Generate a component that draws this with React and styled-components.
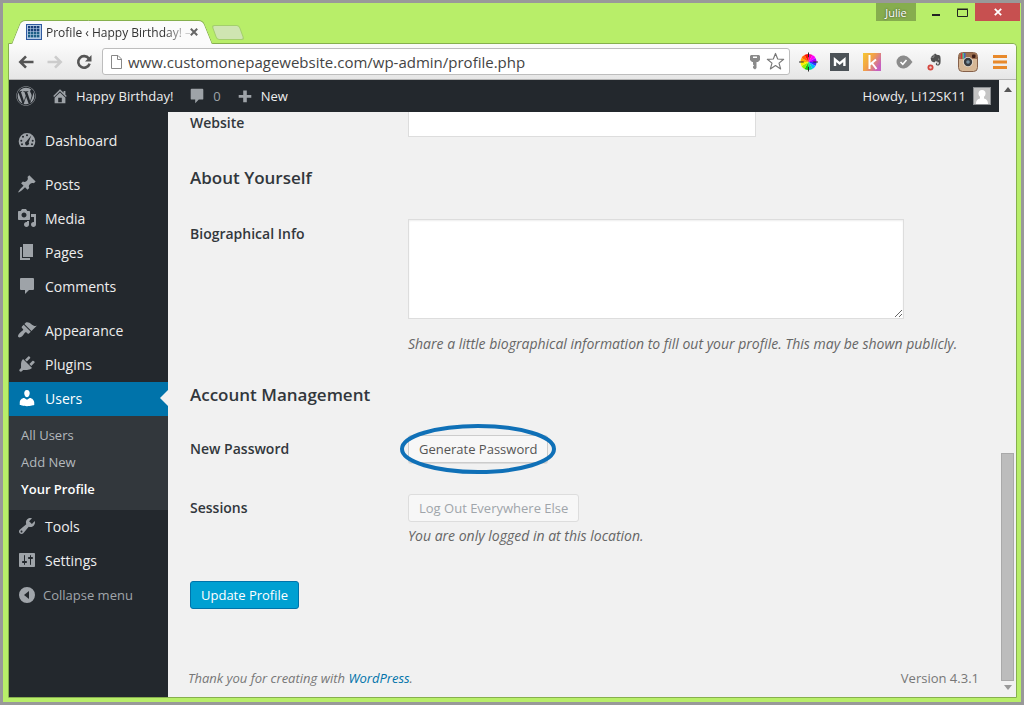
import React from 'react'
import styled, { createGlobalStyle, css } from 'styled-components'
import { FaWordpress, FaEvernote } from 'react-icons/fa'

const GlobalStyle = createGlobalStyle`
*, *::before, *::after {
  box-sizing: border-box;
}

body {
  margin: 0;
  font-family: 'Open Sans', sans-serif;
  font-size: 14px;
  color: #444;
}

button, input, textarea {
  font-family: inherit;
  margin: 0;
}
`

/* ---------- window ---------- */

const Desktop = styled.div`
display: flex;
flex-direction: column;
min-height: 100vh;
border: 3px solid #999;
background: #b8ee69;
padding: 0 4px 4px 5px;
`

const TitleBar = styled.header`
display: flex;
justify-content: space-between;
align-items: flex-start;
height: 40px;
margin-right: -3px;
`

const TabStrip = styled.div`
display: flex;
align-items: flex-end;
gap: 6px;
height: 41px;
padding-left: 8px;
`

const Tab = styled.div`
position: relative;
display: flex;
align-items: center;
width: 192px;
height: 24px;
padding: 0 10px;
color: #333;

&::before, &::after {
  content: '';
  position: absolute;
  top: 0;
  bottom: 0;
  background: #fbfbfb;
  border-top: 1px solid #86b04e;
}
&::before {
  left: 0;
  right: 40%;
  border-left: 1px solid #86b04e;
  border-radius: 5px 0 0 0;
  transform: skewX(-22deg);
}
&::after {
  left: 40%;
  right: 0;
  border-right: 1px solid #86b04e;
  border-radius: 0 5px 0 0;
  transform: skewX(22deg);
}
& > * {
  position: relative;
  z-index: 1;
}
`

const TabTitle = styled.span`
flex: 1;
margin-left: 4px;
overflow: hidden;
white-space: nowrap;
font-size: 12px;
mask-image: linear-gradient(90deg, #000 82%, rgba(0, 0, 0, .25) 97%);
`

const PlainButton = styled.button`
display: flex;
align-items: center;
justify-content: center;
padding: 0;
border: none;
background: transparent;
color: inherit;
cursor: pointer;
`

const CloseTab = styled(PlainButton)`
color: #666;
`

const NewTab = styled(PlainButton)`
width: 28px;
height: 15px;
margin-bottom: 4px;
border: 1px solid #a3cf6c;
border-radius: 3px;
background: #cfe5b2;
transform: skewX(20deg);
`

const WindowButtons = styled.div`
display: flex;
height: 18px;
`

const UserBadge = styled(PlainButton)`
width: 40px;
background: #86ad4e;
color: #fff;
font-size: 11px;
text-shadow: 0 0 2px #333;
margin-right: 7px;
`

const WindowButton = styled(PlainButton)`
width: ${props => props.$close ? '45px' : '26px'};
background: ${props => props.$close ? '#c75050' : 'transparent'};
color: ${props => props.$close ? '#fff' : '#222'};
`

const Frame = styled.div`
flex: 1;
display: flex;
flex-direction: column;
border: 1px solid #86b04e;
border-radius: 0 4px 0 0;
background: #f1f1f1;
`

const Toolbar = styled.div`
display: flex;
align-items: center;
height: 36px;
padding-left: 9px;
border-radius: 0 4px 0 0;
border-bottom: 1px solid #b5b5b5;
background: linear-gradient(#fbfbfb, #e6e6e6);
`

const NavButtons = styled.div`
display: flex;
gap: 13px;
width: 84px;
`

const Omnibox = styled.div`
flex: 1;
display: flex;
align-items: center;
height: 27px;
padding: 0 4px 0 7px;
border: 1px solid #bdbdbd;
border-radius: 3px;
background: #fff;
gap: 5px;
`

const Address = styled.input`
flex: 1;
min-width: 0;
padding: 0;
border: none;
outline: none;
background: transparent;
font-size: 15px;
color: #444;
`

const Extensions = styled.div`
display: grid;
grid-template-columns: repeat(7, 32px);
place-items: center;
margin-left: 2px;
`

/* ---------- page ---------- */

const Viewport = styled.div`
flex: 1;
display: flex;
`

const Page = styled.div`
flex: 1;
min-width: 0;
display: flex;
flex-direction: column;
`

const ScrollBar = styled.div`
display: flex;
flex-direction: column;
align-items: center;
width: 17px;
padding: 7px 0;
background: #f1f1f1;
`

const ScrollTrack = styled.div`
flex: 1;
display: flex;
flex-direction: column;
justify-content: flex-end;
padding: 4px 0;
`

const ScrollThumb = styled.div`
width: 13px;
height: 39%;
border: 1px solid #a9a9a9;
background: #bcbcbc;
`

const AdminBar = styled.nav`
display: flex;
align-items: center;
height: 32px;
padding: 0 8px 0 7px;
background: #23282d;
color: #eee;
font-size: 13px;
`

const BarLink = styled.a`
display: flex;
align-items: center;
gap: 7px;
margin-left: ${props => props.$push ? 'auto' : '0'};
margin-right: 15px;
color: ${props => props.$dim ? '#9ea3a8' : '#eee'};
text-decoration: none;

svg {
  color: #9ea3a8;
}
&:last-child {
  margin-right: 0;
}
`

const Columns = styled.div`
flex: 1;
display: flex;
`

const SideMenu = styled.nav`
width: 159px;
padding-top: 12px;
background: #23282d;
`

const MenuGroup = styled.ul`
list-style: none;
margin: 0 0 10px;
padding: 0;
`

const MenuLink = styled.a`
position: relative;
display: flex;
align-items: center;
gap: 8px;
height: 34px;
padding: 0 0 2px 8px;
color: #eee;
text-decoration: none;

svg {
  color: #9ea3a8;
}

${props => props.$current && css`
  background: #0073aa;
  color: #fff;
  svg {
    color: #fff;
  }
  &::after {
    content: '';
    position: absolute;
    right: 0;
    border: 8px solid transparent;
    border-right-color: #f1f1f1;
  }
`}
`

const SubMenu = styled.ul`
list-style: none;
margin: 0;
padding: 6px 0 7px;
background: #32373c;
`

const SubLink = styled.a`
display: block;
padding-left: 12px;
font-size: 13px;
line-height: 27px;
text-decoration: none;
font-weight: ${props => props.$current ? 600 : 400};
color: ${props => props.$current ? '#fff' : '#b4b9be'};
`

const Collapse = styled(PlainButton)`
gap: 6px;
height: 34px;
padding-left: 8px;
font-size: 13px;
color: #a0a5aa;
`

const Content = styled.main`
flex: 1;
min-width: 0;
display: flex;
flex-direction: column;
padding: 0 20px 0 22px;
`

const FormRow = styled.div`
display: grid;
grid-template-columns: 218px 1fr;
align-items: start;
margin-bottom: ${props => props.$gap || '0'};
`

const Label = styled.label`
padding-top: ${props => props.$top || '4px'};
line-height: 20px;
font-weight: 600;
color: #32373c;
`

const Heading = styled.h3`
margin: 0;
font-size: 17px;
line-height: 24px;
font-weight: 600;
color: #32373c;
`

const TextField = styled.input`
width: 348px;
max-width: 100%;
height: 25px;
border: 1px solid #ddd;
border-top: none;
background: #fff;
`

const Field = styled.div`
min-width: 0;
padding-top: 29px;
`

const TextArea = styled.textarea`
display: block;
width: 496px;
max-width: 100%;
height: 100px;
border: 1px solid #ddd;
background: #fff;
box-shadow: inset 0 1px 2px rgba(0, 0, 0, .07);
`

const Hint = styled.p`
margin: ${props => props.$top || '0'} 0 0;
line-height: 20px;
font-style: italic;
color: #666;
white-space: nowrap;
`

const Passwords = styled.section`
padding-top: 28px;
`

const Button = styled.button`
height: 28px;
padding: 0 10px;
border: 1px solid #ccc;
border-radius: 3px;
background: #f7f7f7;
font-size: 13px;
color: #555;
box-shadow: 0 1px 0 #ddd;

&:disabled {
  border-color: #ddd;
  color: #a0a5aa;
  box-shadow: none;
}

${props => props.$primary && css`
  align-self: flex-start;
  border-color: #0073aa;
  background: #00a0d2;
  color: #fff;
  box-shadow: none;
`}
`

const Circled = styled.div`
position: relative;
width: max-content;

svg {
  position: absolute;
  left: 50%;
  top: 50%;
  transform: translate(-50%, -50%);
  pointer-events: none;
}
`

const Footer = styled.footer`
display: flex;
justify-content: space-between;
margin: auto 0 9px -2px;
font-size: 13px;
line-height: 20px;
color: #777;

a {
  color: #0073aa;
  text-decoration: none;
}
`

/* ---------- icons ---------- */

const paths = {
  dashboard: 'M3.8 17h12.400A8.200 8.200 0 0 0 18.300 11.300 8.300 8.300 0 1 0 1.700 11.300 8.200 8.200 0 0 0 3.800 17zM10 4.300a1 1 0 1 1 0 2 1 1 0 0 1 0-2zM6 5.800a1 1 0 1 1 0 2 1 1 0 0 1 0-2zM4.300 9.700a1 1 0 1 1 0 2 1 1 0 0 1 0-2zM15.700 9.700a1 1 0 1 1 0 2 1 1 0 0 1 0-2zM14.300 5.500L11.700 12.200A2 2 0 1 1 9.300 11.500zM5 13.200a1 1 0 1 1 0 2 1 1 0 0 1 0-2zM15 13.200a1 1 0 1 1 0 2 1 1 0 0 1 0-2z',
  posts: 'M10.44 3.02l1.82-1.82 6.36 6.35-1.83 1.82c-1.05-.68-2.48-.57-3.41.36l-.75.75c-.92.93-1.04 2.35-.35 3.41l-1.83 1.82-2.41-2.41-2.8 2.79c-.42.42-3.38 2.71-3.8 2.29s1.86-3.39 2.28-3.81l2.79-2.79L4.1 9.36l1.83-1.82c1.05.69 2.48.57 3.4-.36l.75-.75c.93-.92 1.05-2.35.36-3.41z',
  media: 'M13 11V4c0-.55-.45-1-1-1h-1.67L9 1H5L3.67 3H2c-.55 0-1 .45-1 1v7c0 .55.45 1 1 1h10c.55 0 1-.45 1-1zM7 4.500c1.380 0 2.500 1.120 2.500 2.500S8.380 9.500 7 9.500 4.500 8.380 4.500 7 5.620 4.500 7 4.500zM14 6h5v10.500c0 1.380-1.120 2.500-2.500 2.500S14 17.880 14 16.500s1.120-2.500 2.500-2.500c.170 0 .340.020.500.050V9h-3V6zm-4 8.050V13h2v3.500c0 1.380-1.120 2.500-2.500 2.500S7 17.880 7 16.500 8.120 14 9.500 14c.170 0 .340.020.500.050z',
  pages: 'M6 15V2h10v13H6zm-1 1h8v2H3V5h2v11z',
  comments: 'M4 2h12a1 1 0 0 1 1 1v10a1 1 0 0 1-1 1h-4l-4 4v-4H4a1 1 0 0 1-1-1V3a1 1 0 0 1 1-1z',
  appearance: 'M14.48 11.06L7.41 3.99l1.5-1.5c.5-.56 2.3-.47 3.51.32 1.21.8 1.43 1.28 2.91 2.1 1.18.64 2.45 1.26 4.45.85zm-.71.71L6.7 4.7 4.93 6.47c-.39.39-.39 1.02 0 1.41l1.06 1.06c.39.39.39 1.03 0 1.42-.6.6-1.43 1.11-2.21 1.69-.35.26-.7.53-1.01.84C1.43 14.23.4 16.08 1.4 17.07c.99 1 2.84-.03 4.18-1.36.31-.31.58-.66.85-1.02.57-.78 1.08-1.61 1.69-2.21.39-.39 1.02-.39 1.41 0l1.06 1.06c.39.39 1.02.39 1.41 0z',
  plugins: 'M13.11 4.36L9.87 7.6 8 5.73l3.24-3.24c.35-.34 1.05-.2 1.56.32.52.51.66 1.21.31 1.55zm-8 1.77l.91-1.12 9.01 9.01-1.19.84c-.71.71-2.63 1.16-3.82 1.16H6.14L4.9 17.26c-.59.59-1.54.59-2.12 0-.59-.58-.59-1.53 0-2.12l1.24-1.24v-3.88c0-1.130.400-3.190 1.090-3.890zm7.260 3.970l3.240-3.240c.340-.350 1.040-.210 1.550.310.520.510.660 1.210.310 1.550l-3.240 3.250z',
  users: 'M10 9.25c-2.27 0-2.73-3.44-2.73-3.44C7 4.02 7.82 2 9.97 2c2.16 0 2.98 2.02 2.71 3.81 0 0-.41 3.44-2.68 3.44zm0 2.57L12.72 10c2.39 0 4.52 2.33 4.52 4.53v2.49s-3.65 1.13-7.240 1.130c-3.650 0-7.240-1.130-7.240-1.130v-2.490c0-2.250 1.940-4.480 4.470-4.480z',
  tools: 'M16.68 9.77c-1.34 1.34-3.3 1.67-4.95.99l-5.41 6.52c-.99.99-2.59.99-3.58 0s-.99-2.590 0-3.570l6.520-5.420c-.680-1.650-.350-3.610.990-4.950 1.280-1.280 3.120-1.620 4.720-1.060l-2.890 2.890 2.820 2.820 2.860-2.870c.530 1.580.180 3.390-1.080 4.650zM3.810 16.210c.400.390 1.040.390 1.430 0 .400-.400.400-1.040 0-1.430-.390-.400-1.030-.400-1.430 0-.390.390-.390 1.030 0 1.430z',
  settings: 'M18 16V4c0-.55-.45-1-1-1H3c-.55 0-1 .45-1 1v12c0 .55.45 1 1 1h14c.55 0 1-.45 1-1zM8 11h1c.55 0 1 .45 1 1s-.45 1-1 1H8v1.500c0 .280-.220.500-.500.500s-.500-.220-.500-.500V13H6c-.55 0-1-.45-1-1s.45-1 1-1h1V5.500c0-.280.220-.500.500-.500s.500.220.500.500V11zm5-2h-1c-.55 0-1-.45-1-1s.45-1 1-1h1V5.500c0-.280.220-.500.500-.500s.500.220.500.500V7h1c.55 0 1 .45 1 1s-.45 1-1 1h-1v5.500c0 .280-.220.500-.500.500s-.500-.220-.500-.500V9z',
  collapse: 'M10 2a8 8 0 1 0 0 16 8 8 0 0 0 0-16zM12 6v8l-5-4z',
  home: 'M16 8.5l1.53 1.53-1.06 1.06L10 4.6l-6.47 6.49-1.06-1.06L10 2.5l4 4v-2h2v4zm-6-2.460l6 5.990V18H4v-5.970zM12 17v-5H8v5h4z',
  plus: 'M17 9v3h-5v5H8v-5H3V9h5V4h4v5z',
}

const Icon = ({ name, size = 20 }) => (
  <svg width={size} height={size} viewBox="0 0 20 20" fill="currentColor" fillRule="evenodd" aria-hidden="true">
    <path d={paths[name]} />
  </svg>
)

const Favicon = () => (
  <svg width="16" height="16" viewBox="0 0 16 16">
    <rect width="16" height="16" fill="#2f5aa0" />
    <rect x="1" y="1" width="14" height="14" fill="#b4cbe6" />
    {[2, 5, 8, 11].map(y => [2, 5, 8, 11].map(x => (
      <rect key={`${x}-${y}`} x={x} y={y} width="2.400" height="2.400" fill={y > 7 ? '#1c5f86' : '#173f78'} />
    )))}
  </svg>
)

const NavArrow = ({ color, flip }) => (
  <svg width="16" height="16" viewBox="0 0 16 16" fill="none" stroke={color} strokeWidth="2.600">
    <path d={flip ? 'M0.500 8H14M8 2.300L13.700 8 8 13.700' : 'M15.500 8H2M8 2.300L2.300 8 8 13.700'} />
  </svg>
)

const Reload = () => (
  <svg width="16" height="16" viewBox="0 0 16 16">
    <path d="M12.800 4.600A5.800 5.800 0 1 0 13.600 9.600" fill="none" stroke="#555" strokeWidth="2.600" />
    <path d="M15.500 1v6.500H9z" fill="#555" />
  </svg>
)

const PageIcon = () => (
  <svg width="13" height="16" viewBox="0 0 13 16" fill="#fff" stroke="#888">
    <path d="M1.500 1.500h6.500l3.500 3.500v9.500h-10zM7.500 1.500v4h4" />
  </svg>
)

const KeyIcon = () => (
  <svg width="12" height="16" viewBox="0 0 12 16" fill="#8a8a8a">
    <path fillRule="evenodd" d="M2 1h8l1 1v4L9 8H7.500v6L6 15.500 4 14v-1.500l1-1-1-1V8H3L1 6V2zM4 2.500V4h4V2.500z" />
  </svg>
)

const StarIcon = () => (
  <svg width="19" height="19" viewBox="0 0 20 20" fill="#fff" stroke="#777" strokeWidth="1.200" strokeLinejoin="round">
    <path d="M10 1.500l2.300 5.900 6.300.3-4.900 4 1.700 6.100L10 14.300l-5.400 3.500 1.700-6.100-4.900-4 6.300-.3z" />
  </svg>
)

const wheel = ['#f0a', '#f0f', '#a0f', '#33f', '#0bf', '#0d9', '#1c1', '#9e0', '#fe0', '#fa0', '#f60', '#f10']

const ColorWheel = () => (
  <svg width="19" height="20" viewBox="-10 -10 20 20">
    {wheel.map((color, i) => (
      <path key={color} d="M0 0L0 -8.500A8.500 8.500 0 0 1 4.250 -7.360z" fill={color} transform={`rotate(${i * 30})`} />
    ))}
    <path d="M0-10v5M0 10V5M-10 0h5M10 0H5" stroke="#222" strokeWidth="1" />
  </svg>
)

const MailIcon = () => (
  <svg width="20" height="20" viewBox="0 0 20 20">
    <rect y="1" width="19" height="18" fill="#4c5257" />
    <path d="M5 14V7.500l4.700 4 4.700-4V14" fill="none" stroke="#fff" strokeWidth="2.400" />
  </svg>
)

const KIcon = () => (
  <svg width="18" height="18" viewBox="0 0 18 18">
    <defs>
      <linearGradient id="kfill" x1="0" y1="0" x2="1" y2="0.600">
        <stop offset="0" stopColor="#f5c832" />
        <stop offset="0.500" stopColor="#f2a048" />
        <stop offset="1" stopColor="#c65fc0" />
      </linearGradient>
    </defs>
    <rect width="18" height="18" fill="url(#kfill)" />
    <path d="M6.500 2v14M13 6.500l-6 5M9 10l4.500 6" fill="none" stroke="#fff" strokeWidth="2" />
  </svg>
)

const CheckBadge = () => (
  <svg width="17" height="14" viewBox="0 0 17 14">
    <path d="M7 0.500c3.500 0 6 2 9.500 6.500C13 11.500 10.500 13.500 7 13.500a6.500 6.500 0 0 1 0-13z" fill="#8b8b8b" />
    <path d="M4.500 7l2.300 2.300L10.500 5" fill="none" stroke="#fff" strokeWidth="1.600" />
  </svg>
)

const Clipper = () => (
  <svg width="18" height="18" viewBox="0 0 18 18">
    <FaEvernote x="2" y="0" width="16" height="17" color="#505050" />
    <circle cx="3.500" cy="14.500" r="3" fill="#d5473f" />
    <circle cx="3.500" cy="14.500" r="1.200" fill="#f3c9c5" />
  </svg>
)

const CameraIcon = () => (
  <svg width="20" height="20" viewBox="0 0 20 20">
    <rect x="0.500" y="0.500" width="19" height="19" rx="4" fill="#d6b796" stroke="#85604a" />
    <path d="M1 7V4a3 3 0 0 1 3-3h12a3 3 0 0 1 3 3v3z" fill="#9c6f50" />
    <path d="M3 1.200h1.500V7H3z" fill="#d33" />
    <path d="M4.500 1h1.500v6H4.500z" fill="#5bb98c" />
    <path d="M6 1h1.500v6H6z" fill="#46b" />
    <rect x="14" y="2.500" width="3.500" height="3.500" rx="1" fill="#3c1d16" />
    <circle cx="10" cy="10" r="5" fill="#e8ded2" />
    <circle cx="10" cy="10" r="4.200" fill="#393b40" />
    <circle cx="10" cy="10" r="1.800" fill="#7890a0" />
  </svg>
)

const MenuIcon = () => (
  <svg width="14" height="14" viewBox="0 0 14 14" fill="#e8892b">
    <path d="M0 0h14v3H0zM0 5.500h14v3H0zM0 11h14v3H0z" />
  </svg>
)

const Cross = ({ size = 8, width = 2 }) => (
  <svg width={size} height={size} viewBox="0 0 8 8" fill="none" stroke="currentColor" strokeWidth={width}>
    <path d="M.8.8l6.400 6.400M7.200.8L.8 7.200" />
  </svg>
)

const Avatar = () => (
  <svg width="18" height="18" viewBox="0 0 18 18">
    <rect x="0.500" y="0.500" width="17" height="17" fill="#c4c4c4" stroke="#8a8d90" />
    <circle cx="9" cy="6.500" r="3.500" fill="#fff" />
    <path d="M3 17c0-4 2-5 4-5.500V9h4v2.500c2 .5 4 1.500 4 5.500z" fill="#fff" />
  </svg>
)

const Triangle = ({ down }) => (
  <svg width="8" height="5" viewBox="0 0 8 5" fill={down ? '#999' : '#555'}>
    <path d={down ? 'M0 0h8L4 5z' : 'M0 5h8L4 0z'} />
  </svg>
)

const Ellipse = () => (
  <svg width="158" height="50" viewBox="0 0 158 50" fill="none" aria-hidden="true">
    <ellipse cx="79" cy="25" rx="76" ry="23" stroke="#0f70b7" strokeWidth="4" />
  </svg>
)

const menu = [
  [['dashboard', 'Dashboard']],
  [['posts', 'Posts'], ['media', 'Media'], ['pages', 'Pages'], ['comments', 'Comments']],
  [['appearance', 'Appearance'], ['plugins', 'Plugins'], ['users', 'Users'], ['tools', 'Tools'], ['settings', 'Settings']],
]

const userPages = ['All Users', 'Add New', 'Your Profile']


const BrowserTabs = () => (
  <TitleBar>
    <TabStrip>
      <Tab>
        <Favicon />
        <TabTitle>Profile ‹ Happy Birthday! –</TabTitle>
        <CloseTab aria-label="Close tab"><Cross /></CloseTab>
      </Tab>
      <NewTab aria-label="New tab" />
    </TabStrip>
    <WindowButtons>
      <UserBadge>Julie</UserBadge>
      <WindowButton aria-label="Minimize">
        <svg width="10" height="10"><path d="M1 8h8" stroke="currentColor" strokeWidth="2" /></svg>
      </WindowButton>
      <WindowButton aria-label="Maximize">
        <svg width="11" height="9"><path d="M.5 1.500h10v7H.5zM0 1h11" fill="none" stroke="currentColor" /></svg>
      </WindowButton>
      <WindowButton $close aria-label="Close"><Cross width={1.8} /></WindowButton>
    </WindowButtons>
  </TitleBar>
)

const BrowserToolbar = () => (
  <Toolbar>
    <NavButtons>
      <PlainButton aria-label="Back"><NavArrow color="#555" /></PlainButton>
      <PlainButton aria-label="Forward"><NavArrow color="#ccc" flip /></PlainButton>
      <PlainButton aria-label="Reload"><Reload /></PlainButton>
    </NavButtons>
    <Omnibox>
      <PageIcon />
      <Address aria-label="Address" defaultValue="www.customonepagewebsite.com/wp-admin/profile.php" />
      <KeyIcon />
      <StarIcon />
    </Omnibox>
    <Extensions>
      <PlainButton aria-label="Color picker"><ColorWheel /></PlainButton>
      <PlainButton aria-label="Mail"><MailIcon /></PlainButton>
      <PlainButton aria-label="Keywords"><KIcon /></PlainButton>
      <PlainButton aria-label="Check"><CheckBadge /></PlainButton>
      <PlainButton aria-label="Clipper"><Clipper /></PlainButton>
      <PlainButton aria-label="Camera"><CameraIcon /></PlainButton>
      <PlainButton aria-label="Menu"><MenuIcon /></PlainButton>
    </Extensions>
  </Toolbar>
)

const TopBar = () => (
  <AdminBar>
    <BarLink href="#wp" aria-label="WordPress"><FaWordpress size={20} /></BarLink>
    <BarLink href="#site"><Icon name="home" size={18} />Happy Birthday!</BarLink>
    <BarLink href="#comments" $dim><Icon name="comments" size={18} />0</BarLink>
    <BarLink href="#new"><Icon name="plus" size={18} />New</BarLink>
    <BarLink href="#me" $push>Howdy, Li12SK11<Avatar /></BarLink>
  </AdminBar>
)

const Sidebar = () => (
  <SideMenu>
    {menu.map((group, i) => (
      <MenuGroup key={i}>
        {group.map(([name, label]) => (
          <li key={name}>
            <MenuLink href={`#${name}`} $current={name === 'users'}>
              <Icon name={name} />
              {label}
            </MenuLink>
            {name === 'users' && (
              <SubMenu>
                {userPages.map(page => (
                  <li key={page}>
                    <SubLink href="#users" $current={page === 'Your Profile'}>{page}</SubLink>
                  </li>
                ))}
              </SubMenu>
            )}
          </li>
        ))}
        {i === menu.length - 1 && (
          <li><Collapse><Icon name="collapse" />Collapse menu</Collapse></li>
        )}
      </MenuGroup>
    ))}
  </SideMenu>
)

const Profile = () => (
  <Content>
    <FormRow $gap="29px">
      <Label htmlFor="website" $top="1px">Website</Label>
      <TextField id="website" type="text" />
    </FormRow>
    <Heading>About Yourself</Heading>
    <FormRow $gap="29px">
      <Label htmlFor="bio" $top="34px">Biographical Info</Label>
      <Field>
        <TextArea id="bio" />
        <Hint $top="15px">Share a little biographical information to fill out your profile. This may be shown publicly.</Hint>
      </Field>
    </FormRow>
    <Heading>Account Management</Heading>
    <Passwords>
      <FormRow $gap="31px">
        <Label htmlFor="generate">New Password</Label>
        <Circled>
          <Button id="generate" type="button">Generate Password</Button>
          <Ellipse />
        </Circled>
      </FormRow>
      <FormRow $gap="35px">
        <Label htmlFor="logout">Sessions</Label>
        <div>
          <Button id="logout" type="button" disabled>Log Out Everywhere Else</Button>
          <Hint $top="4px">You are only logged in at this location.</Hint>
        </div>
      </FormRow>
    </Passwords>
    <Button $primary type="button">Update Profile</Button>
    <Footer>
      <em>Thank you for creating with <a href="#wordpress">WordPress</a>.</em>
      <span>Version 4.3.1</span>
    </Footer>
  </Content>
)

const App = () => {
  return (
    <Desktop>
      <GlobalStyle />
      <BrowserTabs />
      <Frame>
        <BrowserToolbar />
        <Viewport>
          <Page>
            <TopBar />
            <Columns>
              <Sidebar />
              <Profile />
            </Columns>
          </Page>
          <ScrollBar>
            <Triangle />
            <ScrollTrack>
              <ScrollThumb />
            </ScrollTrack>
            <Triangle down />
          </ScrollBar>
        </Viewport>
      </Frame>
    </Desktop>
  )
}

export default App
